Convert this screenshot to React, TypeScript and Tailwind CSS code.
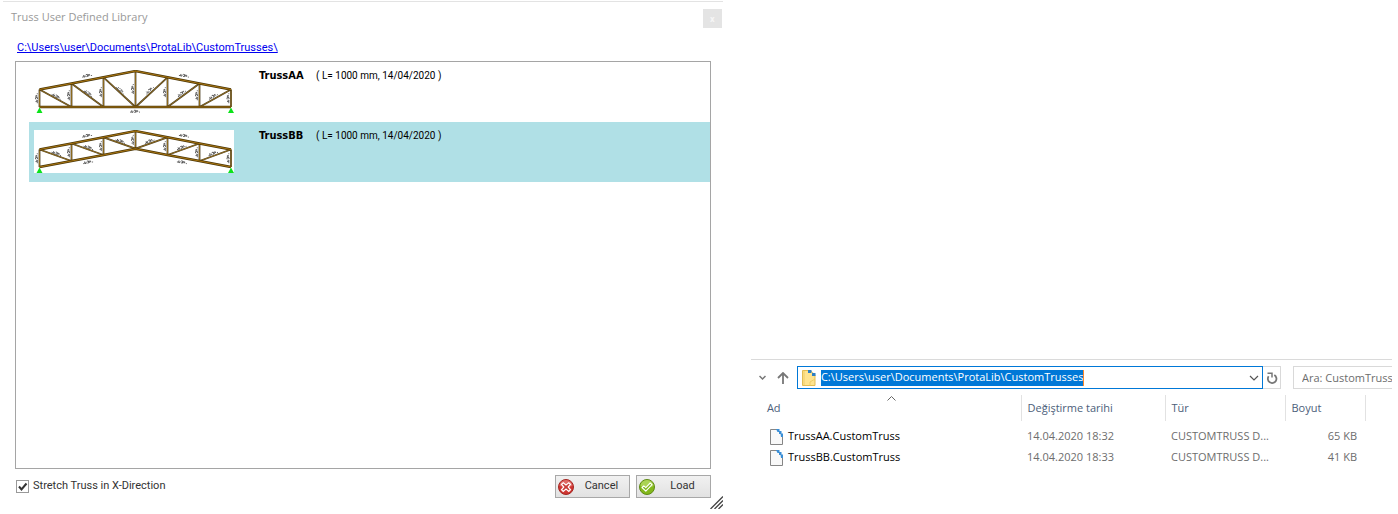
import { useState } from "react";

interface Truss {
  name: string;
  info: string;
  bottom: number[];
  lowerLabels: number[][];
}

interface FileRow {
  name: string;
  date: string;
  type: string;
  size: string;
}

const NODE_X = [5.5, 37.5, 69.5, 101.5, 133.5, 165.5, 197];
const TOP_Y = [19.5, 13.5, 7.3, 1, 7.3, 13.5, 19.5];

const trusses: Truss[] = [
  {
    name: "TrussAA",
    info: "( L= 1000 mm, 14/04/2020 )",
    bottom: [37, 37, 37, 37, 37, 37, 37],
    lowerLabels: [[101, 41.3, 0]],
  },
  {
    name: "TrussBB",
    info: "( L= 1000 mm, 14/04/2020 )",
    bottom: [37, 31, 25, 18.7, 25, 31, 37],
    lowerLabels: [
      [54, 32, -10],
      [148, 32, 10],
    ],
  },
];

const files: FileRow[] = [
  { name: "TrussAA.CustomTruss", date: "14.04.2020 18:32", type: "CUSTOMTRUSS D...", size: "65 KB" },
  { name: "TrussBB.CustomTruss", date: "14.04.2020 18:33", type: "CUSTOMTRUSS D...", size: "41 KB" },
];

function Scribble({ x, y, angle }: { x: number; y: number; angle: number }) {
  return (
    <path
      d="M-5 .8h1.4M-3.3 -1v2h1.3v-1.5M-1 -1h1.6v2h-1.4M1.3 1v-1.6h1.4v1.4M4 .8h1"
      transform={`translate(${x} ${y}) rotate(${angle})`}
      fill="none"
      stroke="#444"
      strokeWidth=".8"
    />
  );
}

function TrussDrawing({ truss }: { truss: Truss }) {
  const { bottom, lowerLabels } = truss;
  const points = (ys: number[]) => NODE_X.map((x, i) => `${x},${ys[i]}`).join(" ");
  const members: number[][] = [];
  const labels: number[][] = [[53, 5.5, -10], [150, 5.5, 10], ...lowerLabels];

  NODE_X.forEach((x, i) => {
    members.push([x, TOP_Y[i], x, bottom[i]]);
    labels.push([x - 3, (TOP_Y[i] + bottom[i]) / 2, -90]);
  });
  for (let i = 0; i < 3; i++) {
    const j = 6 - i;
    const midY = (TOP_Y[i] + bottom[i + 1]) / 2 - 2;
    const tilt = (Math.atan2(bottom[i + 1] - TOP_Y[i], 32) * 180) / Math.PI;
    members.push([NODE_X[i], TOP_Y[i], NODE_X[i + 1], bottom[i + 1]]);
    members.push([NODE_X[j], TOP_Y[j], NODE_X[j - 1], bottom[j - 1]]);
    labels.push([NODE_X[i] + 17, midY, tilt]);
    labels.push([NODE_X[j] - 18, midY, -tilt]);
  }

  return (
    <svg className="h-[43px] w-[200px] shrink-0 bg-white" viewBox="0 0 200 43" aria-label={truss.name}>
      {labels.map(([x, y, angle], i) => (
        <Scribble key={i} x={x} y={y} angle={angle} />
      ))}
      {members.map(([x1, y1, x2, y2], i) => (
        <g key={i}>
          <line x1={x1} y1={y1} x2={x2} y2={y2} stroke="#4d4024" strokeWidth="1.8" />
          <line x1={x1} y1={y1} x2={x2} y2={y2} stroke="#a87b1c" strokeWidth=".7" />
        </g>
      ))}
      {[TOP_Y, bottom].map((ys, i) => (
        <g key={i} fill="none" strokeLinejoin="round">
          <polyline points={points(ys)} stroke="#4a3608" strokeWidth="2.4" />
          <polyline points={points(ys)} stroke="#a87410" strokeWidth="1.1" />
        </g>
      ))}
      <path d="M5.5 37.5l3 5.5h-6zM197 37.5l3 5.5h-6z" fill="#0be31b" />
    </svg>
  );
}

function FileIcon() {
  return (
    <svg className="h-4 w-[13px] shrink-0" viewBox="0 0 13 16">
      <path d="M7.5 .5H.5v15h12V7" fill="#f8f8f8" stroke="#858585" />
      <path d="M6 0h3.5v3H7.5zM9 2h2.5v3H9zM10.5 4.5H13v3.500h-2z" fill="#3a8ed6" />
    </svg>
  );
}

function FolderIcon() {
  return (
    <svg className="h-4 w-[14px] shrink-0" viewBox="0 0 14 16">
      <path d="M.5.5h8l4.500 4v11H.5z" fill="#ffe48f" stroke="#e3bd52" />
      <path d="M2 1v14M8 15.500V12l5-3" fill="none" stroke="#ebc75f" strokeWidth=".8" />
      <path d="M9 0l4.500 5V0z" fill="#fff" />
      <path d="M6 0h3.500v3H6zM10 3h3.500v3H10z" fill="#2d7fc5" />
    </svg>
  );
}

function CancelIcon() {
  return (
    <svg className="size-4" viewBox="0 0 16 16">
      <circle cx="8" cy="8" r="7.500" fill="#cf3531" stroke="#a32622" />
      <path d="M1.500 7a6.500 6 0 0 1 13 0q-6 2-13 0" fill="#e7827d" opacity=".7" />
      <path
        d="M5.200 3.700L8 6l2.800-2.300 1.700 1.500L10.200 8l2.300 2.800-1.700 1.600L8 10.100l-2.800 2.300-1.700-1.600L5.800 8 3.500 5.200z"
        fill="#c93a36"
        stroke="#fff"
        strokeWidth="1.200"
      />
    </svg>
  );
}

function LoadIcon() {
  return (
    <svg className="size-4" viewBox="0 0 16 16">
      <circle cx="8" cy="8" r="7.500" fill="#83b81c" stroke="#5f8a16" />
      <path d="M1.500 7a6.500 6 0 0 1 13 0q-6 3-13 0" fill="#b5da63" opacity=".8" />
      <path
        d="M3 8.500l1.800-1.700 2 1.800L11.200 4l1.800 1.700-6.200 6.500z"
        fill="#83b81c"
        stroke="#fff"
        strokeWidth="1.100"
        strokeLinejoin="round"
      />
    </svg>
  );
}

function LibraryDialog() {
  const [selected, setSelected] = useState<string>("TrussBB");
  const [stretch, setStretch] = useState<boolean>(true);

  return (
    <section className="flex min-w-0 flex-col pt-px text-[11px]">
      <header className="ml-[3px] flex items-start justify-between border-t border-[#e3e3e3] pt-[7px] pr-px pl-2">
        <h1 className="font-['Open_Sans',sans-serif] leading-4 text-[#999]">Truss User Defined Library</h1>
        <button className="h-[19px] w-[19px] bg-[#e4e4e4] text-[9px] leading-4 font-bold text-[#f6f6f6]" aria-label="Close">
          x
        </button>
      </header>
      <div className="flex grow flex-col pr-3 pb-4 pl-[15px]">
        <a href="#" className="mt-3 mb-[5px] ml-0.5 self-start leading-4 text-[#0000f0] underline">
          C:\Users\user\Documents\ProtaLib\CustomTrusses\
        </a>
        <ul className="grow border border-[#a5a5a5] bg-white pl-[13px]">
          {trusses.map((truss) => (
            <li key={truss.name}>
              <button
                className={`flex h-15 w-full items-start pt-2 pl-[5px] text-left text-black ${
                  selected === truss.name ? "bg-[#b0e0e6]" : "bg-white"
                }`}
                onClick={() => setSelected(truss.name)}
              >
                <TrussDrawing truss={truss} />
                <span className="ml-[25px] w-[57px] font-['DejaVu_Sans_Condensed','DejaVu_Sans',sans-serif] leading-3 font-bold">
                  {truss.name}
                </span>
                <span className="text-[10px] leading-3">{truss.info}</span>
              </button>
            </li>
          ))}
        </ul>
        <footer className="mt-1.5 flex items-center justify-between">
          <label className="flex items-center gap-1 pl-px text-[#333]">
            <span className="relative flex">
              <input
                type="checkbox"
                checked={stretch}
                onChange={() => setStretch(!stretch)}
                className="size-[13px] appearance-none border border-[#999] bg-white"
              />
              {stretch && (
                <svg className="pointer-events-none absolute inset-0 size-[13px]" viewBox="0 0 13 13">
                  <path d="M3 6.500l2.500 3L10.500 3.500" fill="none" stroke="#333" strokeWidth="2" />
                </svg>
              )}
            </span>
            Stretch Truss in X-Direction
          </label>
          <div className="flex gap-1.5 text-[#333]">
            <button className="flex h-[23px] w-[75px] items-center border border-[#a8a8a8] bg-linear-to-b from-[#f1f1f1] to-[#e2e2e2] pl-0.5">
              <CancelIcon />
              <span className="grow text-center">Cancel</span>
            </button>
            <button className="flex h-[23px] w-[75px] items-center border border-[#a8a8a8] bg-linear-to-b from-[#f1f1f1] to-[#e2e2e2] pl-0.5">
              <LoadIcon />
              <span className="grow text-center">Load</span>
            </button>
          </div>
        </footer>
      </div>
      <svg className="-mt-[18px] mb-[5px] size-[13px] self-end" viewBox="0 0 13 13">
        <path d="M.5 13L13 .5M4.500 13L13 4.500M8.500 13L13 8.500" stroke="#444" strokeWidth="1.300" />
      </svg>
    </section>
  );
}

function Explorer() {
  return (
    <section className="flex min-w-0 flex-col justify-end overflow-hidden pb-[46px] font-['Open_Sans',sans-serif] text-[11px]">
      <div className="flex h-9 items-center border-t border-[#dadada]">
        <button className="ml-2 flex" aria-label="Recent locations">
          <svg className="size-[7px]" viewBox="0 0 7 7">
            <path d="M.5 2l3 3 3-3" fill="none" stroke="#777" strokeWidth="1.500" />
          </svg>
        </button>
        <button className="ml-[11px] flex" aria-label="Up">
          <svg className="size-3" viewBox="0 0 12 12">
            <path d="M6 12V1M1 6l5-5 5 5" fill="none" stroke="#777" strokeWidth="1.800" />
          </svg>
        </button>
        <div className="ml-2 flex h-[23px] min-w-0 grow items-center border border-[#0078d7] pl-1">
          <FolderIcon />
          <input
            className="ml-[5px] field-sizing-content h-4 border-r border-[#ff8728] bg-[#0078d7] text-white outline-none"
            aria-label="Address"
            defaultValue="C:\Users\user\Documents\ProtaLib\CustomTrusses"
          />
          <button className="mr-[3px] ml-auto flex" aria-label="Show history">
            <svg className="size-2.5" viewBox="0 0 10 10">
              <path d="M1 3l4 4 4-4" fill="none" stroke="#555" strokeWidth="1.200" />
            </svg>
          </button>
        </div>
        <button
          className="flex h-[23px] w-[18px] items-center justify-center border border-l-0 border-[#d9d9d9]"
          aria-label="Refresh"
        >
          <svg className="size-3" viewBox="0 0 12 12">
            <path d="M2.600 4.300A4.300 4.300 0 1 0 8.300 3" fill="none" stroke="#777" strokeWidth="1.800" />
            <path d="M1.500 1.300H6v4.200" fill="none" stroke="#777" strokeWidth="1.500" />
          </svg>
        </button>
        <input
          className="ml-3 h-[23px] w-[99px] border border-r-0 border-[#d9d9d9] pl-2 outline-none placeholder:text-[#6d6d6d]"
          aria-label="Search"
          placeholder="Ara: CustomTrusses"
        />
      </div>
      <table className="w-full table-fixed text-left text-[#6d6d6d]">
        <thead className="text-[#4c607a]">
          <tr className="h-[26px]">
            <th className="border-r border-[#e2e2e2] p-0 pl-4 font-normal">
              <div className="relative">
                Ad
                <svg className="absolute -top-1 left-[120px] h-[5px] w-[9px]" viewBox="0 0 9 5">
                  <path d="M.5 4.500l4-4 4 4" fill="none" stroke="#666" />
                </svg>
              </div>
            </th>
            <th className="w-36 border-r border-[#e2e2e2] p-0 pl-1.5 font-normal">Değiştirme tarihi</th>
            <th className="w-30 border-r border-[#e2e2e2] p-0 pl-1.5 font-normal">Tür</th>
            <th className="w-20 border-r border-[#e2e2e2] p-0 pl-1.5 font-normal">Boyut</th>
            <th className="w-[27px] p-0" />
          </tr>
        </thead>
        <tbody>
          <tr className="h-[5px]" />
          {files.map((file) => (
            <tr key={file.name} className="h-[21px]">
              <td className="p-0 pl-[19px] text-black">
                <div className="flex items-center gap-[5px]">
                  <FileIcon />
                  {file.name}
                </div>
              </td>
              <td className="p-0 pl-1.5 whitespace-nowrap">{file.date}</td>
              <td className="p-0 pl-1.5 whitespace-nowrap">{file.type}</td>
              <td className="p-0 pr-2 text-right">{file.size}</td>
              <td className="p-0" />
            </tr>
          ))}
        </tbody>
      </table>
    </section>
  );
}

export default function App() {
  return (
    <main className="grid min-h-screen grid-cols-[53fr_47fr] gap-7 bg-white pr-1.5 font-['Roboto',sans-serif]">
      <LibraryDialog />
      <Explorer />
    </main>
  );
}
